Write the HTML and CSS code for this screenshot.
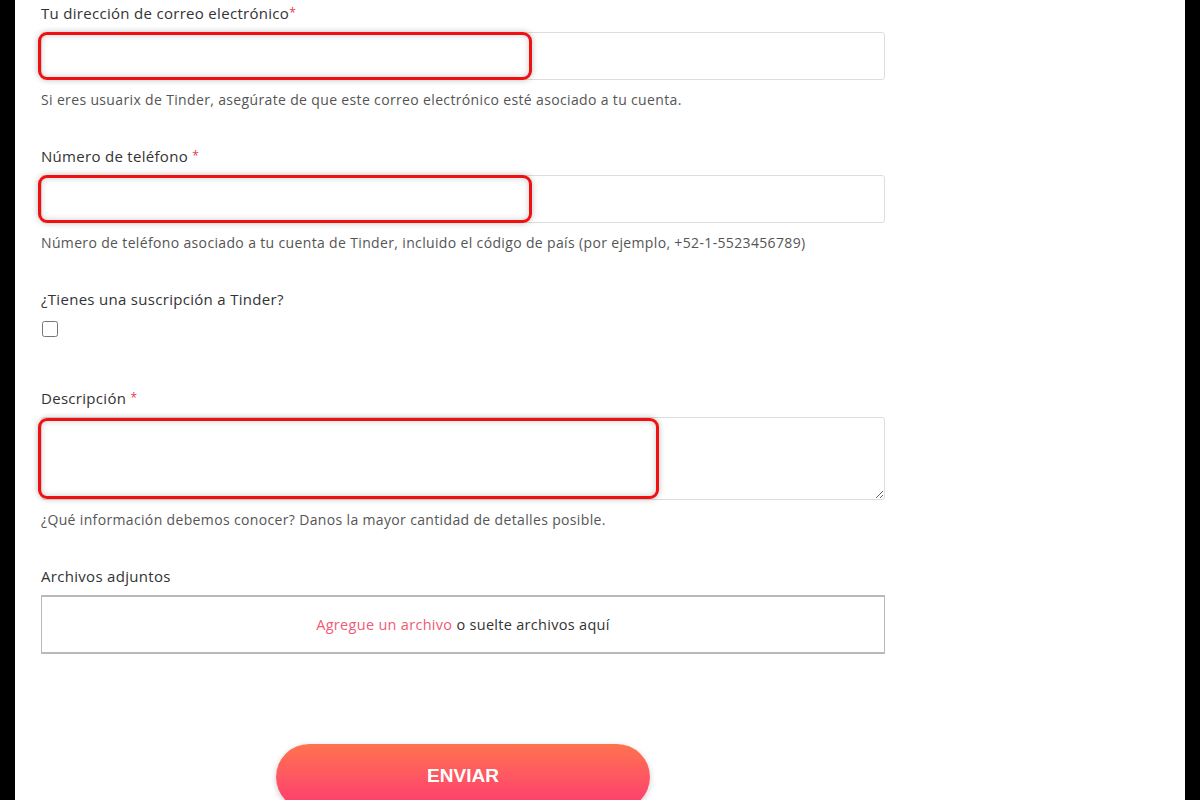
FILE: index.html
```html
<!DOCTYPE html>
<html lang="es">
<head>
    <meta charset="UTF-8">
    <meta name="viewport" content="width=device-width, initial-scale=1.0">
    <title>Enviar una solicitud</title>
    <link rel="stylesheet" href="styles.css">
</head>
<body>
    <div class="page">
        <form class="request-form">
            <div class="field">
                <label>Tu dirección de correo electrónico<span class="req">*</span></label>
                <div class="input-wrap">
                    <input type="text" class="text-input">
                    <div class="mark mark-short"></div>
                </div>
                <p class="hint">Si eres usuarix de Tinder, asegúrate de que este correo electrónico esté asociado a tu cuenta.</p>
            </div>

            <div class="field">
                <label>Número de teléfono <span class="req">*</span></label>
                <div class="input-wrap">
                    <input type="text" class="text-input">
                    <div class="mark mark-short"></div>
                </div>
                <p class="hint">Número de teléfono asociado a tu cuenta de Tinder, incluido el código de país (por ejemplo, +52-1-5523456789)</p>
            </div>

            <div class="field field-check">
                <label>¿Tienes una suscripción a Tinder?</label>
                <input type="checkbox" class="check">
            </div>

            <div class="field">
                <label>Descripción <span class="req">*</span></label>
                <div class="input-wrap">
                    <textarea class="text-area"></textarea>
                    <div class="mark mark-wide"></div>
                </div>
                <p class="hint">¿Qué información debemos conocer? Danos la mayor cantidad de detalles posible.</p>
            </div>

            <div class="field">
                <label>Archivos adjuntos</label>
                <div class="dropzone">
                    <a href="#" class="add-file">Agregue un archivo</a> o suelte archivos aquí
                </div>
            </div>

            <div class="actions">
                <button type="submit" class="submit-button">ENVIAR</button>
            </div>
        </form>
    </div>
</body>
</html>
```

FILE: styles.css
```css
body {
    margin: 0;
    padding: 0;
    background: #000;
    font-family: 'Open Sans', 'Liberation Sans', sans-serif;
    color: #333;
    overflow: hidden;
}

.page {
    margin: 0 15px;
    height: 800px;
    background: #fff;
    overflow: hidden;
}

.request-form {
    width: 844px;
    padding: 4px 0 0 26px;
}

.field {
    margin-bottom: 39px;
}

.field-check {
    margin-bottom: 52px;
}

.field label {
    display: block;
    font-size: 15px;
    line-height: 18px;
    letter-spacing: 0.3px;
    color: #333;
    margin-bottom: 10px;
}

.req {
    color: #e8394d;
    font-size: 12px;
    vertical-align: top;
}

.input-wrap {
    position: relative;
}

.text-input,
.text-area {
    display: block;
    box-sizing: border-box;
    width: 100%;
    height: 48px;
    border: 1px solid #ddd;
    border-radius: 3px;
    background: #fff;
    font-family: inherit;
    font-size: 14px;
    margin: 0;
}

.text-area {
    height: 83px;
    resize: vertical;
}

/* red highlight drawn over the fields */
.mark {
    position: absolute;
    top: 0;
    left: -3px;
    height: 48px;
    box-sizing: border-box;
    border: 3px solid #f01010;
    border-radius: 9px;
    box-shadow: 0 0 6px rgba(0, 0, 0, 0.25), inset 0 0 6px rgba(0, 0, 0, 0.2);
}

.mark-short {
    width: 494px;
}

.mark-wide {
    top: 1px;
    width: 621px;
    height: 81px;
}

.hint {
    margin: 12px 0 0;
    font-size: 14px;
    line-height: 16px;
    letter-spacing: 0.35px;
    color: #555;
}

.check {
    display: block;
    width: 16px;
    height: 16px;
    margin: 13px 0 0 1px;
}

.dropzone {
    height: 55px;
    border: 2px solid #b9b9b9;
    border-right-width: 1px;
    border-left-width: 1px;
    display: flex;
    align-items: center;
    justify-content: center;
    font-size: 14.5px;
    letter-spacing: 0.3px;
    color: #333;
}

.add-file {
    color: #ef5a77;
    text-decoration: none;
    margin-right: 4px;
}

.actions {
    padding-top: 51px;
    display: flex;
    justify-content: center;
}

.submit-button {
    width: 374px;
    height: 66px;
    border: none;
    border-radius: 33px;
    background: linear-gradient(180deg, #ff7350, #fd3a73);
    color: #fff;
    font-family: 'Liberation Sans', sans-serif;
    font-weight: bold;
    font-size: 19px;
    padding-bottom: 4px;
    box-shadow: 0 2px 6px rgba(0, 0, 0, 0.2);
    cursor: pointer;
}
```
